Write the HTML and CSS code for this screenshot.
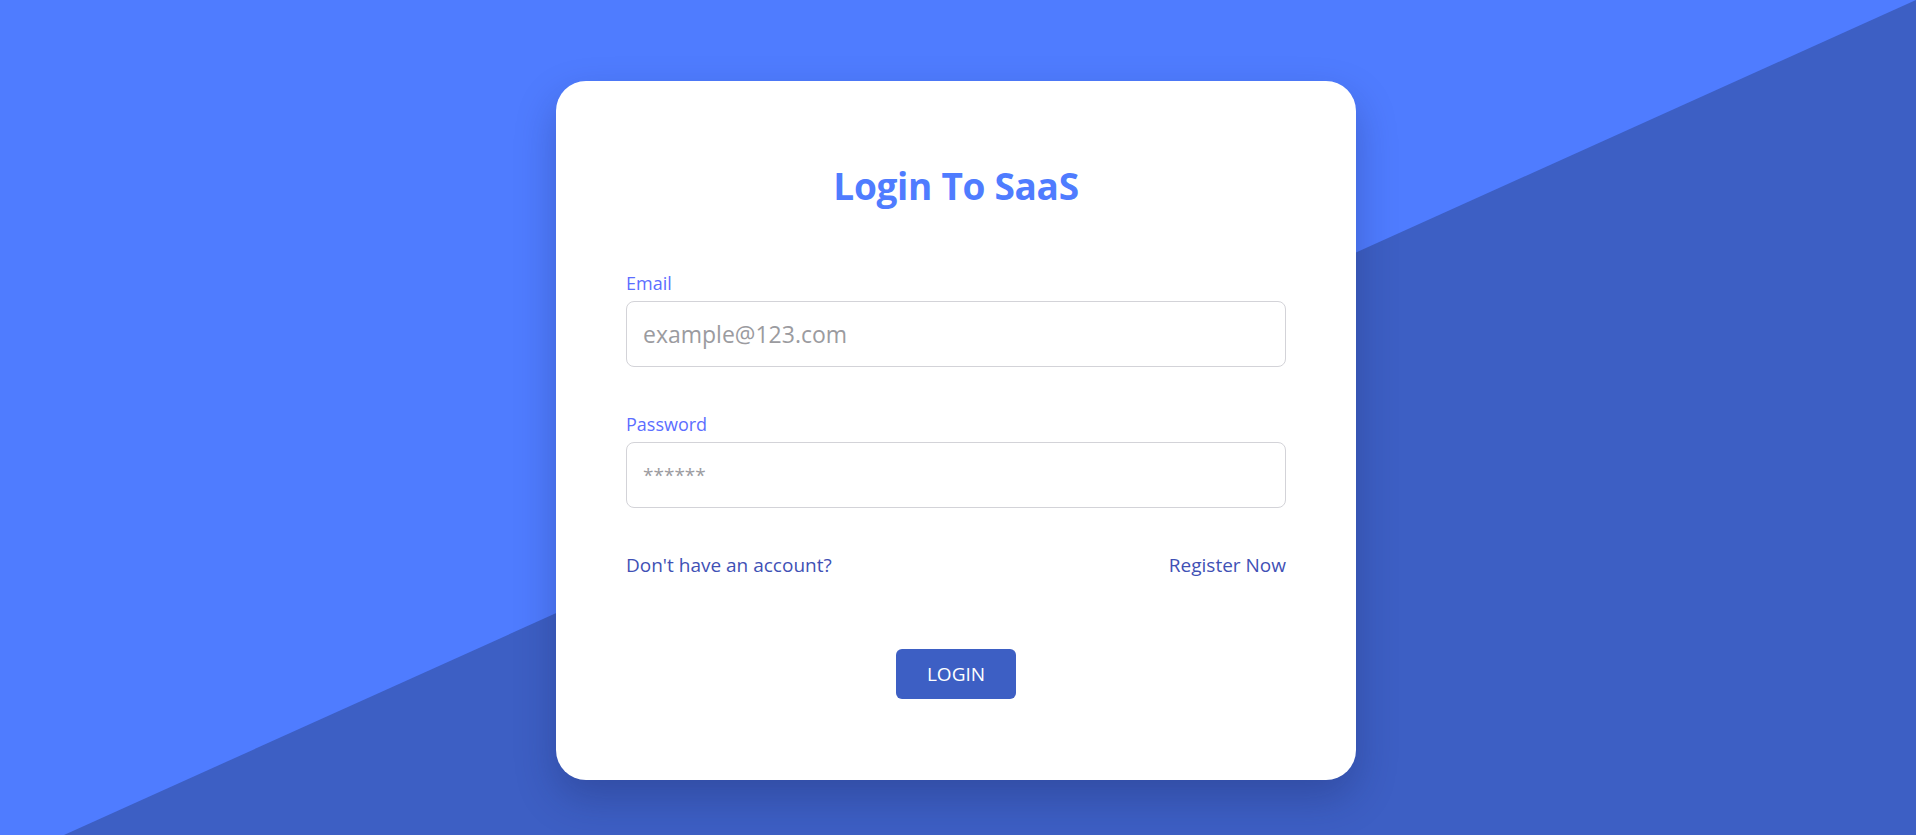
FILE: index.html
```html
<!DOCTYPE html>
<html lang="en">
<head>
<meta charset="utf-8">
<title>Login To SaaS</title>
<link rel="stylesheet" href="styles.css">
</head>
<body>
<div class="page">
  <form class="card">
    <h1 class="title">Login To SaaS</h1>
    <div class="field">
      <label class="label" for="email">Email</label>
      <input class="input" id="email" type="text" placeholder="example@123.com">
    </div>
    <div class="field">
      <label class="label" for="password">Password</label>
      <input class="input input-pass" id="password" type="password" placeholder="******">
    </div>
    <div class="links">
      <a class="link" href="#">Don't have an account?</a>
      <a class="link" href="#">Register Now</a>
    </div>
    <div class="actions">
      <button class="btn" type="button">LOGIN</button>
    </div>
  </form>
</div>
</body>
</html>
```

FILE: styles.css
```css
* { box-sizing: border-box; }
html, body { margin: 0; padding: 0; height: 100%; }
body {
  font-family: "Open Sans", "Noto Sans", "Liberation Sans", sans-serif;
  background: #4f7cff;
  overflow: hidden;
}
.page {
  position: relative;
  width: 100%;
  height: 100vh;
  display: flex;
  justify-content: center;
  align-items: flex-start;
  padding-top: 81px;
  padding-right: 4px;
  background: #4f7cff;
}
.page::before {
  content: "";
  position: absolute;
  inset: 0;
  background: #3d5fc4;
  clip-path: polygon(100% 0, 100% 100%, 3.34% 100%);
}
.card {
  position: relative;
  z-index: 1;
  width: 800px;
  height: 699px;
  background: #fff;
  border-radius: 30px;
  padding: 80px 70px 0;
  box-shadow: 0 18px 40px rgba(20, 30, 80, 0.28);
  display: flex;
  flex-direction: column;
}
.title {
  margin: 0;
  text-align: center;
  font-size: 37px;
  line-height: 50px;
  font-weight: 700;
  color: #4f7cff;
  letter-spacing: -0.3px;
}
.field {
  display: flex;
  flex-direction: column;
  gap: 6px;
}
.field:first-of-type { margin-top: 60px; }
.field + .field { margin-top: 45px; }
.label {
  font-size: 18px;
  line-height: 24px;
  color: #5c6eff;
}
.input {
  height: 66px;
  width: 100%;
  border: 1px solid #d3d3d8;
  border-radius: 8px;
  padding: 0 16px;
  font-family: inherit;
  font-size: 23px;
  color: #333;
  outline: none;
}
.input::placeholder { color: #9b9b9f; }
.input-pass { font-size: 19px; }
.links {
  margin-top: 45px;
  display: flex;
  justify-content: space-between;
  font-size: 19px;
  line-height: 24px;
}
.link {
  color: #3f51b5;
  text-decoration: none;
}
.actions {
  margin-top: 72px;
  display: flex;
  justify-content: center;
}
.btn {
  width: 120px;
  height: 50px;
  border: none;
  border-radius: 6px;
  background: #3d5fc4;
  color: #fff;
  font-family: inherit;
  font-size: 19px;
  cursor: pointer;
}
```
